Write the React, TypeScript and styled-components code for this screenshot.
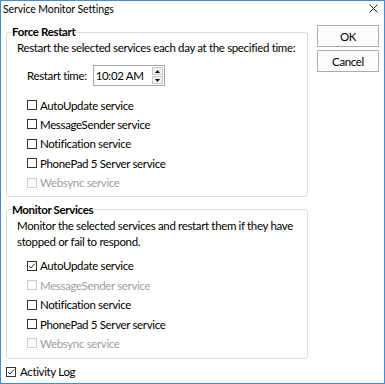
import React from 'react';
import styled, { createGlobalStyle } from 'styled-components';

const GlobalStyle = createGlobalStyle`
  html, body {
    margin: 0;
    padding: 0;
    background: #ffffff;
  }
  body {
    font-family: Lato, "Liberation Sans", sans-serif;
    color: #000000;
  }
`;

const Window = styled.div`
  width: 385px;
  height: 384px;
  box-sizing: border-box;
  border: 1px solid #3f8fd8;
  background: #ffffff;
  display: flex;
  flex-direction: column;
  overflow: hidden;
`;

const TitleBar = styled.div`
  height: 15px;
  display: flex;
  align-items: center;
  justify-content: space-between;
  padding: 0 6px 0 2px;
  font-size: 10.5px;
  letter-spacing: -0.1px;
`;

const Body = styled.div`
  display: grid;
  grid-template-columns: 302px 62px;
  column-gap: 9px;
  padding: 0 5px;
  align-items: start;
  font-size: 11.5px;
  letter-spacing: -0.35px;
`;

const LeftColumn = styled.div`
  padding-top: 8px;
  display: flex;
  flex-direction: column;
`;

const RightColumn = styled.div`
  padding-top: 9px;
  display: flex;
  flex-direction: column;
  gap: 3px;
`;

const Button = styled.button`
  height: 22px;
  box-sizing: border-box;
  border: 1px solid #adadad;
  background: #fdfdfd;
  font-family: inherit;
  font-size: 11.5px;
  letter-spacing: inherit;
  color: #000000;
  padding: 0;
`;

const Group = styled.fieldset<{ $gapTop?: number }>`
  margin: ${p => p.$gapTop ?? 0}px 0 0 0;
  padding: 0;
  border: 1px solid #dcdcdc;
  border-radius: 3px;
  min-width: 0;
`;

const GroupTitle = styled.legend`
  margin-left: 4px;
  padding: 0 1px;
  font-weight: bold;
  line-height: 16px;
`;

const GroupBody = styled.div<{ $bottom: number }>`
  padding: 0 10px ${p => p.$bottom}px 10px;
`;

const Description = styled.p`
  margin: 0;
  line-height: 16px;
  white-space: nowrap;
`;

const TimeRow = styled.div`
  display: flex;
  align-items: center;
  gap: 6px;
  margin: 9px 0 0 10px;
  height: 21px;
`;

const TimeInput = styled.div`
  width: 72px;
  height: 21px;
  box-sizing: border-box;
  border: 1px solid #a9a9a9;
  display: flex;
  align-items: center;
  justify-content: space-between;
  padding: 0 1px 0 2px;
`;

const Spinner = styled.div`
  display: flex;
  flex-direction: column;
  gap: 1px;
`;

const SpinButton = styled.div`
  width: 11px;
  height: 8px;
  box-sizing: border-box;
  border: 1px solid #c8c8c8;
  background: #f0f0f0;
  display: flex;
  align-items: center;
  justify-content: center;
`;

const CheckList = styled.div<{ $top: number }>`
  margin: ${p => p.$top}px 0 0 10px;
  display: flex;
  flex-direction: column;
`;

const CheckRow = styled.div<{ $disabled?: boolean }>`
  height: 19.4px;
  display: flex;
  align-items: center;
  gap: 3px;
  white-space: nowrap;
  color: ${p => (p.$disabled ? '#a0a0a0' : '#000000')};
`;

const Box = styled.span<{ $disabled?: boolean }>`
  width: 10px;
  height: 10px;
  box-sizing: border-box;
  border: 1px solid ${p => (p.$disabled ? '#cccccc' : '#333333')};
  background: #ffffff;
  display: flex;
  align-items: center;
  justify-content: center;
  flex-shrink: 0;
`;

const ActivityRow = styled(CheckRow)`
  margin-top: 3px;
  gap: 4px;
`;

const CheckMark: React.FC = () => (
  <svg width="8" height="8" viewBox="0 0 8 8">
    <path d="M1 4 L3 6 L7 1.5" fill="none" stroke="#333" strokeWidth="1" />
  </svg>
);

const Check: React.FC<{ checked?: boolean; disabled?: boolean; label: string }> = ({ checked, disabled, label }) => (
  <CheckRow $disabled={disabled}>
    <Box $disabled={disabled}>{checked && <CheckMark />}</Box>
    {label}
  </CheckRow>
);

const restartServices = [
  { label: 'AutoUpdate service' },
  { label: 'MessageSender service' },
  { label: 'Notification service' },
  { label: 'PhonePad 5 Server service' },
  { label: 'Websync service', disabled: true },
];

const monitorServices = [
  { label: 'AutoUpdate service', checked: true },
  { label: 'MessageSender service', disabled: true },
  { label: 'Notification service' },
  { label: 'PhonePad 5 Server service' },
  { label: 'Websync service', disabled: true },
];

const App: React.FC = () => (
  <>
    <GlobalStyle />
    <Window>
      <TitleBar>
        <span>Service Monitor Settings</span>
        <svg width="9" height="9" viewBox="0 0 9 9">
          <path d="M0.5 0.5 L8.5 8.5 M8.5 0.5 L0.5 8.5" stroke="#222" strokeWidth="1" />
        </svg>
      </TitleBar>
      <Body>
        <LeftColumn>
          <Group>
            <GroupTitle>Force Restart</GroupTitle>
            <GroupBody $bottom={3.6}>
              <Description>Restart the selected services each day at the specified time:</Description>
              <TimeRow>
                <span>Restart time:</span>
                <TimeInput>
                  <span>10:02 AM</span>
                  <Spinner>
                    <SpinButton>
                      <svg width="5" height="3" viewBox="0 0 5 3"><path d="M0 3 L2.5 0 L5 3 Z" fill="#000" /></svg>
                    </SpinButton>
                    <SpinButton>
                      <svg width="5" height="3" viewBox="0 0 5 3"><path d="M0 0 L2.5 3 L5 0 Z" fill="#000" /></svg>
                    </SpinButton>
                  </Spinner>
                </TimeInput>
              </TimeRow>
              <CheckList $top={9.4}>
                {restartServices.map(s => (
                  <Check key={s.label} label={s.label} disabled={s.disabled} />
                ))}
              </CheckList>
            </GroupBody>
          </Group>
          <Group $gapTop={5}>
            <GroupTitle>Monitor Services</GroupTitle>
            <GroupBody $bottom={5}>
              <Description>
                Monitor the selected services and restart them if they have
                <br />
                stopped or fail to respond.
              </Description>
              <CheckList $top={6.3}>
                {monitorServices.map(s => (
                  <Check key={s.label} label={s.label} checked={s.checked} disabled={s.disabled} />
                ))}
              </CheckList>
            </GroupBody>
          </Group>
          <ActivityRow>
            <Box>
              <CheckMark />
            </Box>
            Activity Log
          </ActivityRow>
        </LeftColumn>
        <RightColumn>
          <Button>OK</Button>
          <Button>Cancel</Button>
        </RightColumn>
      </Body>
    </Window>
  </>
);

export default App;
